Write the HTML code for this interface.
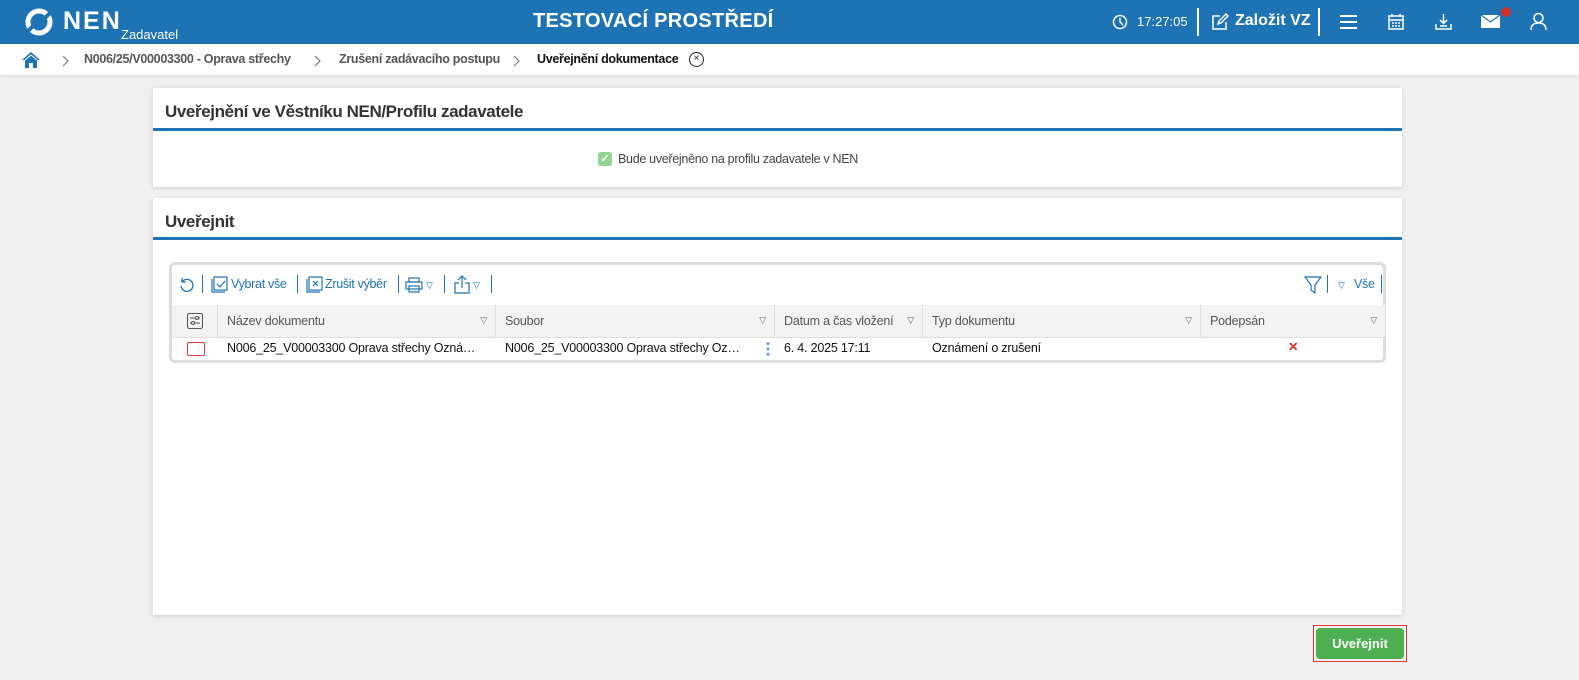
<!DOCTYPE html>
<html><head><meta charset="utf-8"><style>
*{box-sizing:border-box;margin:0;padding:0}
body{width:1579px;height:680px;background:#f0f0f0;font-family:"Liberation Sans",sans-serif;position:relative;overflow:hidden;color:#222}
.abs{position:absolute}
.hdr{left:0;top:0;width:1579px;height:44px;background:#1e73b4;color:#fff}
.bc{left:0;top:44px;width:1579px;height:31px;background:#fff;box-shadow:0 1px 3px rgba(0,0,0,.1)}
.bc span{position:absolute;top:8px;font-size:12.5px;font-weight:bold;color:#555;letter-spacing:-.3px}
.panel{background:#fff;left:153px;width:1249px;box-shadow:0 1px 4px rgba(0,0,0,.15)}
.ptitle{position:absolute;left:12px;font-size:17px;font-weight:bold;color:#333;letter-spacing:-.4px}
.line{position:absolute;left:0;width:1249px;height:3px;background:#1e73b4}
.tbl{left:169px;top:262px;width:1217px;height:101px;border:3px solid #ddd;border-radius:6px;background:#fff}
.th{position:absolute;top:40px;height:33px;background:#f3f3f3;border-right:1px solid #ddd;border-bottom:1px solid #ddd;font-size:12.5px;color:#555;padding:9px 9px;letter-spacing:-.2px}
.th i{position:absolute;right:8px;top:10px;font-style:normal;font-size:9px;color:#666}
.td{position:absolute;top:76px;font-size:12.5px;color:#111;letter-spacing:-.2px}
.tb{position:absolute;top:12px;font-size:12.5px;color:#1e73b4;letter-spacing:-.3px}
.sep{position:absolute;top:10px;width:1px;height:18px;background:#1e73b4}
</style></head><body>
<div class="abs hdr">
  <svg class="abs" style="left:24px;top:7px" width="30" height="30" viewBox="0 0 30 30"><circle cx="15" cy="15" r="11" fill="none" stroke="#fff" stroke-width="5"/><path d="M4 24L9 19M21 11L26 6" stroke="#1e73b4" stroke-width="4"/></svg>
  <div class="abs" style="left:63px;top:7px;font-size:25px;font-weight:bold;letter-spacing:2px">NEN</div>
  <div class="abs" style="left:121px;top:27px;font-size:13px">Zadavatel</div>
  <div class="abs" style="left:533px;top:10px;font-size:20px;font-weight:bold;letter-spacing:.3px">TESTOVACÍ PROSTŘEDÍ</div>
  <svg class="abs" style="left:1112px;top:14px" width="16" height="16" viewBox="0 0 16 16" fill="none" stroke="#fff" stroke-width="1.5"><circle cx="8" cy="8" r="6.5"/><path d="M8 4v4l3 3"/></svg>
  <div class="abs" style="left:1137px;top:14px;font-size:13px">17:27:05</div>
  <div class="abs" style="left:1197px;top:8px;width:2px;height:28px;background:#fff"></div>
  <svg class="abs" style="left:1211px;top:13px" width="18" height="18" viewBox="0 0 18 18" fill="none" stroke="#fff" stroke-width="1.5"><path d="M9 3H2v13h13V9"/><path d="M7 11l1-3 7-7 2 2-7 7z"/></svg>
  <div class="abs" style="left:1235px;top:12px;font-size:16px;font-weight:bold">Založit VZ</div>
  <div class="abs" style="left:1318px;top:8px;width:2px;height:28px;background:#fff"></div>
  <div class="abs" style="left:1340px;top:15px;width:17px;height:2px;background:#fff;box-shadow:0 6px 0 #fff,0 12px 0 #fff"></div>
  <svg class="abs" style="left:1388px;top:13px" width="16" height="17" viewBox="0 0 16 17" fill="none" stroke="#fff" stroke-width="1.5"><rect x="1" y="3" width="14" height="13"/><path d="M4 1v3M12 1v3M1 7h14M4 10h2M7 10h2M10 10h2M4 13h2M7 13h2M10 13h2"/></svg>
  <svg class="abs" style="left:1435px;top:13px" width="17" height="17" viewBox="0 0 17 17" fill="none" stroke="#fff" stroke-width="1.5"><path d="M8.5 1v9M5 7l3.5 3.5L12 7M1 11v5h15v-5M5 13h7"/></svg>
  <svg class="abs" style="left:1481px;top:15px" width="19" height="13" viewBox="0 0 19 13"><rect width="19" height="13" fill="#fff"/><path d="M0 0l9.5 7L19 0" fill="none" stroke="#1e73b4" stroke-width="1.2"/></svg>
  <div class="abs" style="left:1501px;top:7px;width:10px;height:10px;border-radius:50%;background:#d32f2f"></div>
  <svg class="abs" style="left:1530px;top:12px" width="17" height="19" viewBox="0 0 17 19" fill="none" stroke="#fff" stroke-width="1.5"><circle cx="8.5" cy="6" r="4.5"/><path d="M1 18c0-5 3-7 7.5-7s7.5 2 7.5 7"/></svg>
</div>
<div class="abs bc">
  <svg class="abs" style="left:22px;top:7px" width="18" height="17" viewBox="0 0 18 17"><path d="M9 1L0 9h3v8h4v-5h4v5h4V9h3z" fill="#1e73b4"/><path d="M3 9L9 4l6 5" fill="none" stroke="#fff" stroke-width="1"/></svg>
  <svg class="abs" style="left:62px;top:11px" width="8" height="12" viewBox="0 0 8 12"><path d="M1 1l5 5-5 5" fill="none" stroke="#777" stroke-width="1.2"/></svg>
  <span style="left:84px">N006/25/V00003300 - Oprava střechy</span>
  <svg class="abs" style="left:314px;top:11px" width="8" height="12" viewBox="0 0 8 12"><path d="M1 1l5 5-5 5" fill="none" stroke="#777" stroke-width="1.2"/></svg>
  <span style="left:339px">Zrušení zadávacího postupu</span>
  <svg class="abs" style="left:513px;top:11px" width="8" height="12" viewBox="0 0 8 12"><path d="M1 1l5 5-5 5" fill="none" stroke="#777" stroke-width="1.2"/></svg>
  <span style="left:537px;color:#111">Uveřejnění dokumentace</span>
  <div class="abs" style="left:689px;top:8px;width:15px;height:15px;border:1.5px solid #222;border-radius:50%;font-size:10px;text-align:center;line-height:12px">×</div>
</div>
<div class="abs panel" style="top:88px;height:99px">
  <div class="ptitle" style="top:14px">Uveřejnění ve Věstníku NEN/Profilu zadavatele</div>
  <div class="line" style="top:40px"></div>
  <div class="abs" style="left:445px;top:64px;width:14px;height:14px;border-radius:3px;background:#8fd48f;color:#fff;font-size:11px;text-align:center;line-height:14px;font-weight:bold">✓</div>
  <div class="abs" style="left:465px;top:64px;font-size:12.5px;color:#444;letter-spacing:-.3px">Bude uveřejněno na profilu zadavatele v NEN</div>
</div>
<div class="abs panel" style="top:198px;height:417px">
  <div class="ptitle" style="top:14px">Uveřejnit</div>
  <div class="line" style="top:39px"></div>
</div>
<div class="abs tbl">
  <svg class="abs" style="left:7px;top:12px" width="16" height="16" viewBox="0 0 16 16" fill="none" stroke="#1e73b4" stroke-width="1.3"><path d="M3 5a6 6 0 1 1-1 4M3 1v4h4"/></svg>
  <div class="sep" style="left:30px"></div>
  <svg class="abs" style="left:39px;top:11px" width="17" height="17" viewBox="0 0 17 17" fill="none" stroke="#1e73b4" stroke-width="1.2"><rect x="3" y="1" width="13" height="13"/><path d="M1 3v13h13M6 8l3 3 5-6"/></svg>
  <div class="tb" style="left:59px">Vybrat vše</div>
  <div class="sep" style="left:125px"></div>
  <svg class="abs" style="left:134px;top:11px" width="17" height="17" viewBox="0 0 17 17" fill="none" stroke="#1e73b4" stroke-width="1.2"><rect x="3" y="1" width="13" height="13"/><path d="M1 3v13h13M7 5l5 5M12 5l-5 5"/></svg>
  <div class="tb" style="left:153px">Zrušit výběr</div>
  <div class="sep" style="left:226px"></div>
  <svg class="abs" style="left:233px;top:12px" width="18" height="16" viewBox="0 0 18 16" fill="none" stroke="#1e73b4" stroke-width="1.2"><rect x="4" y="1" width="10" height="4"/><rect x="1" y="5" width="16" height="7"/><rect x="4" y="9" width="10" height="6"/></svg>
  <div class="tb" style="left:254px;font-size:9px;top:15px">▽</div>
  <div class="sep" style="left:272px"></div>
  <svg class="abs" style="left:282px;top:10px" width="16" height="19" viewBox="0 0 16 19" fill="none" stroke="#1e73b4" stroke-width="1.2"><path d="M8 13V1M4 5l4-4 4 4M5 8H1v10h14V8h-4"/></svg>
  <div class="tb" style="left:301px;font-size:9px;top:15px">▽</div>
  <div class="sep" style="left:319px"></div>
  <svg class="abs" style="left:1132px;top:11px" width="18" height="18" viewBox="0 0 18 18" fill="none" stroke="#1e73b4" stroke-width="1.2"><path d="M1 1h16l-6 8v8l-4-3V9z"/></svg>
  <div class="sep" style="left:1155px"></div>
  <div class="tb" style="left:1166px;font-size:9px;top:15px">▽</div>
  <div class="tb" style="left:1182px">Vše</div>
  <div class="sep" style="left:1209px"></div>
  <div class="th" style="left:0;width:46px"><svg style="position:absolute;left:15px;top:8px" width="16" height="16" viewBox="0 0 16 16" fill="none" stroke="#555" stroke-width="1.1"><rect x=".5" y=".5" width="15" height="15" rx="2"/><path d="M3 5h10M3 10h10"/><circle cx="10" cy="5" r="1.5" fill="#fff"/><circle cx="6" cy="10" r="1.5" fill="#fff"/></svg></div>
  <div class="th" style="left:46px;width:278px">Název dokumentu<i>▽</i></div>
  <div class="th" style="left:324px;width:279px">Soubor<i>▽</i></div>
  <div class="th" style="left:603px;width:148px">Datum a čas vložení<i>▽</i></div>
  <div class="th" style="left:751px;width:278px">Typ dokumentu<i>▽</i></div>
  <div class="th" style="left:1029px;width:184px;border-right:0">Podepsán<i>▽</i></div>
  <div class="abs" style="left:15px;top:77px;width:18px;height:14px;border:1.5px solid #e53935;border-radius:2px"></div>
  <div class="td" style="left:55px">N006_25_V00003300 Oprava střechy Ozná…</div>
  <div class="td" style="left:333px">N006_25_V00003300 Oprava střechy Oz…</div>
  <div class="abs" style="left:594px;top:76px;width:4px;height:16px;background:radial-gradient(circle,#4a90d9 1.2px,transparent 1.6px) 0 0/4px 5.3px"></div>
  <div class="td" style="left:612px">6. 4. 2025 17:11</div>
  <div class="td" style="left:760px">Oznámení o zrušení</div>
  <div class="td" style="left:1116px;color:#d32f2f;font-weight:bold;top:74px">✕</div>
</div>
<div class="abs" style="left:1313px;top:625px;width:94px;height:37px;border:1px solid #e53935"></div>
<div class="abs" style="left:1316px;top:628px;width:88px;height:31px;background:#4caf50;border-radius:4px;color:#fff;font-size:13px;font-weight:bold;text-align:center;line-height:31px">Uveřejnit</div>
</body></html>
